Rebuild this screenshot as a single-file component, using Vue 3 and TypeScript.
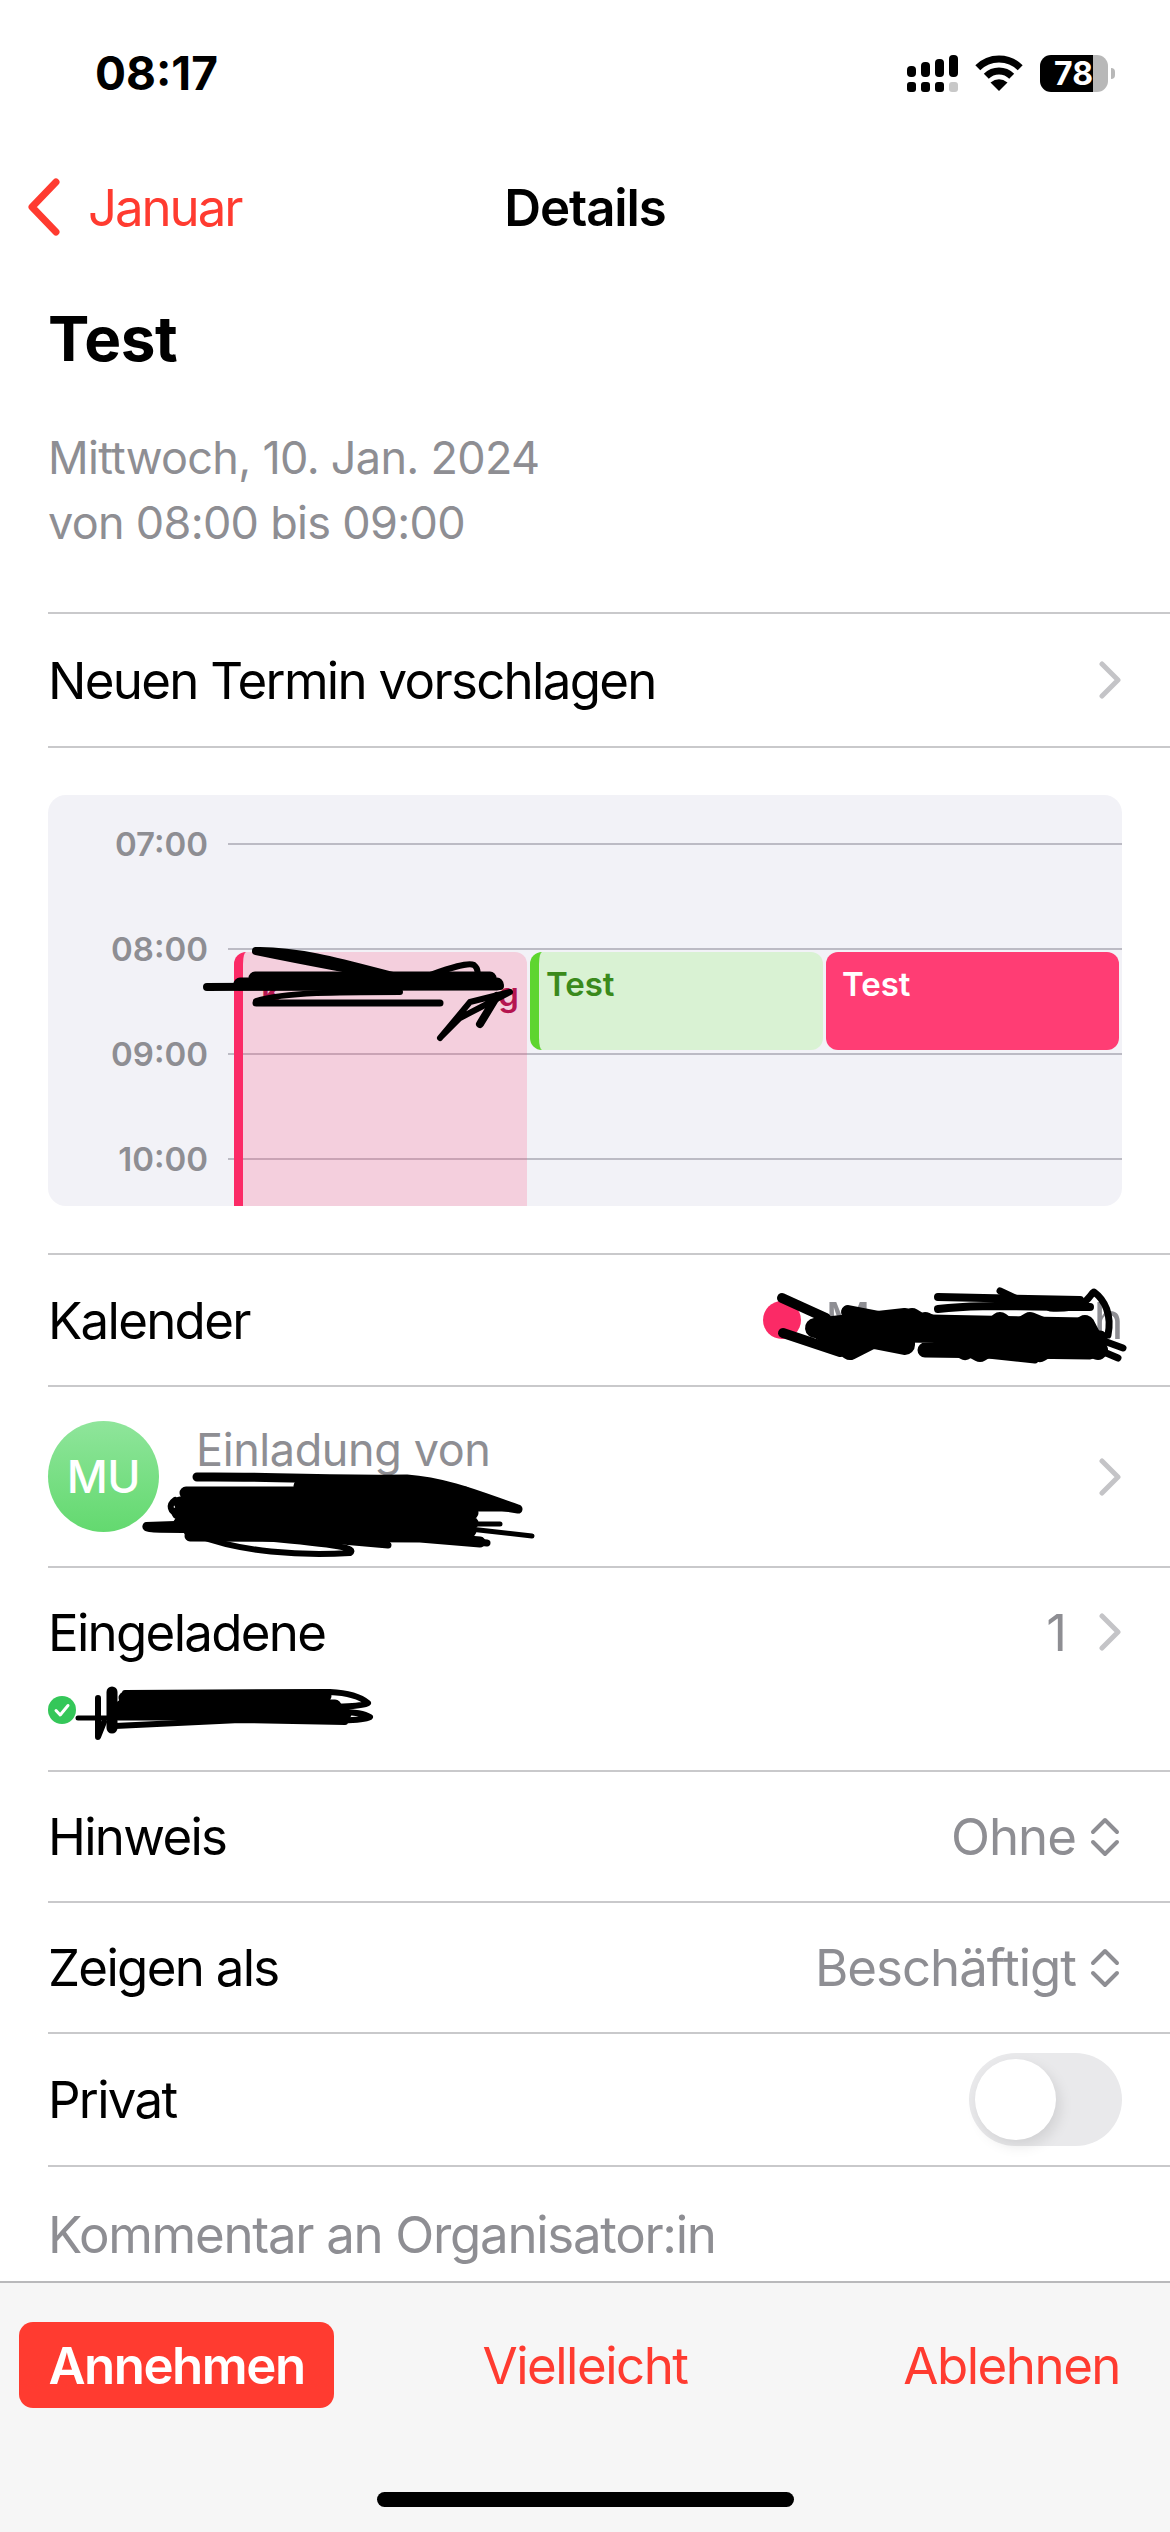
<script setup lang="ts">
const hours: string[] = ['07:00', '08:00', '09:00', '10:00']
const topSignal: number[] = [11, 15, 18, 22]
</script>

<template>
  <div class="phone">
    <header class="status">
      <span class="time">08:17</span>
      <div class="status-icons">
        <div class="signal">
          <div class="signal-col" v-for="(h, i) in topSignal" :key="i">
            <i class="bar" :style="{ height: h + 'px' }"></i>
            <i class="dot" :class="{ off: i === 3 }"></i>
          </div>
        </div>
        <svg class="wifi" width="48" height="36" viewBox="0 0 48 36">
          <path d="M2.8 12.8A30 30 0 0 1 45.2 12.8" fill="none" stroke="#000" stroke-width="7" />
          <path d="M11.3 21.3A18 18 0 0 1 36.7 21.3" fill="none" stroke="#000" stroke-width="7" />
          <path d="M24 36L15.5 27.5Q24 21 32.5 27.5Z" fill="#000" />
        </svg>
        <div class="battery">
          <div class="battery-body"><span>78</span></div>
          <i class="battery-nub"></i>
        </div>
      </div>
    </header>

    <nav class="nav">
      <div class="back">
        <svg width="38" height="60" viewBox="0 0 38 60">
          <path d="M31 5L7 30L31 55" fill="none" stroke="#ff3b30" stroke-width="7" stroke-linecap="round" stroke-linejoin="round" />
        </svg>
        <span>Januar</span>
      </div>
      <span class="nav-title">Details</span>
    </nav>

    <section class="intro">
      <h1>Test</h1>
      <p>Mittwoch, 10. Jan. 2024</p>
      <p>von 08:00 bis 09:00</p>
    </section>

    <div class="row row-propose">
      <span>Neuen Termin vorschlagen</span>
      <svg class="chev" width="24" height="38" viewBox="0 0 24 38">
        <path d="M4 3L20 19L4 35" fill="none" stroke="#c4c4c7" stroke-width="5" stroke-linecap="round" stroke-linejoin="round" />
      </svg>
    </div>

    <div class="timeline-wrap">
      <div class="timeline">
        <div class="hour" v-for="h in hours" :key="h">
          <span class="hour-label">{{ h }}</span>
          <i class="hour-line"></i>
        </div>
        <div class="event event-own"><span>K</span><span>g</span></div>
        <div class="event event-green"><span>Test</span></div>
        <div class="event event-pink"><span>Test</span></div>
      </div>
    </div>

    <div class="row row-calendar">
      <span>Kalender</span>
      <div class="calendar-value">
        <i class="calendar-dot"></i>
        <div class="calendar-name"><span>M</span><span>h</span></div>
      </div>
    </div>

    <div class="row row-invite">
      <div class="avatar">MU</div>
      <span class="invite-label">Einladung von</span>
      <svg class="chev" width="24" height="38" viewBox="0 0 24 38">
        <path d="M4 3L20 19L4 35" fill="none" stroke="#c4c4c7" stroke-width="5" stroke-linecap="round" stroke-linejoin="round" />
      </svg>
    </div>

    <div class="row row-attendees">
      <div class="attendee-head">
        <span>Eingeladene</span>
        <div class="value value-count">
          <span>1</span>
          <svg class="chev" width="24" height="38" viewBox="0 0 24 38">
            <path d="M4 3L20 19L4 35" fill="none" stroke="#c4c4c7" stroke-width="5" stroke-linecap="round" stroke-linejoin="round" />
          </svg>
        </div>
      </div>
      <svg class="accepted" width="28" height="28" viewBox="0 0 28 28">
        <circle cx="14" cy="14" r="14" fill="#34c759" />
        <path d="M8 14.5L12.2 19L20 9.5" fill="none" stroke="#fff" stroke-width="3" stroke-linecap="round" stroke-linejoin="round" />
      </svg>
    </div>

    <div class="row">
      <span>Hinweis</span>
      <div class="value">
        <span>Ohne</span>
        <svg class="updown" width="30" height="40" viewBox="0 0 30 40">
          <path d="M3 15L15 3L27 15M3 25L15 37L27 25" fill="none" stroke="#8e8e93" stroke-width="4" stroke-linecap="round" stroke-linejoin="round" />
        </svg>
      </div>
    </div>

    <div class="row">
      <span>Zeigen als</span>
      <div class="value">
        <span>Beschäftigt</span>
        <svg class="updown" width="30" height="40" viewBox="0 0 30 40">
          <path d="M3 15L15 3L27 15M3 25L15 37L27 25" fill="none" stroke="#8e8e93" stroke-width="4" stroke-linecap="round" stroke-linejoin="round" />
        </svg>
      </div>
    </div>

    <div class="row row-private">
      <span>Privat</span>
      <div class="toggle"><i class="knob"></i></div>
    </div>

    <div class="row row-comment">
      <span>Kommentar an Organisator:in</span>
    </div>

    <footer class="footer">
      <div class="actions">
        <button class="action accept">Annehmen</button>
        <button class="action maybe">Vielleicht</button>
        <button class="action decline">Ablehnen</button>
      </div>
      <i class="home"></i>
    </footer>

    <svg class="scribbles" width="1170" height="2532" viewBox="0 0 1170 2532" fill="none" stroke="#000" stroke-linecap="round" stroke-linejoin="round">
      <g>
        <path d="M256 951C300 950 350 965 400 978C340 968 300 960 256 951" stroke-width="8" />
        <path d="M207 987L500 986" stroke-width="8" />
        <path d="M255 978L490 978M240 984L497 984" stroke-width="13" />
        <path d="M256 1001C285 992 340 992 400 992" stroke-width="6" />
        <path d="M256 1003L440 1003" stroke-width="7" />
        <path d="M430 975C450 968 468 962 474 965C479 969 478 975 476 978" stroke-width="6" />
        <path d="M440 1038L470 1002L510 992L460 1018L440 1038" stroke-width="6" />
        <path d="M480 1024L497 996" stroke-width="8" />
      </g>

      <g>
        <path d="M782 1298L826 1318M783 1333L840 1352" stroke-width="10" />
        <path d="M815 1328L905 1318L905 1345L818 1328L850 1350L905 1322" stroke-width="20" />
        <path d="M848 1312L900 1322" stroke-width="14" />
        <path d="M912 1318L965 1350L1000 1322L1040 1352L1085 1325L1098 1350L1030 1322L980 1352L925 1322L970 1345L1060 1328L1090 1345" stroke-width="20" />
        <path d="M905 1335L1100 1338M925 1350L1090 1352M930 1322L1085 1325" stroke-width="15" />
        <path d="M938 1297L1080 1300M938 1309C980 1304 1020 1307 1090 1307" stroke-width="8" />
        <path d="M1000 1291L1030 1305" stroke-width="7" />
        <path d="M1050 1308C1090 1310 1088 1295 1094 1292C1105 1300 1112 1315 1108 1335" stroke-width="7" />
        <path d="M1060 1325L1123 1348M1040 1325L1118 1358M960 1352L1035 1360" stroke-width="7" />
      </g>

      <g>
        <path d="M197 1477C260 1476 300 1480 407 1479C450 1482 490 1500 518 1509L473 1502" stroke-width="9" />
        <path d="M186 1493L465 1493M180 1503L472 1503M178 1513L472 1513M180 1523L472 1523M190 1531L470 1531M300 1486L440 1490" stroke-width="13" />
        <path d="M175 1500C168 1505 170 1512 178 1514" stroke-width="6" />
        <path d="M190 1536L420 1537L480 1542" stroke-width="11" />
        <path d="M175 1524L146 1525C143 1530 150 1530 190 1530" stroke-width="6" />
        <path d="M197 1535C240 1552 300 1556 350 1553C357 1548 340 1545 263 1538" stroke-width="6" />
        <path d="M297 1537L388 1545C385 1540 360 1535 340 1533" stroke-width="7" />
        <path d="M470 1529L532 1536M470 1524L500 1524" stroke-width="5" />
        <path d="M440 1538L487 1543" stroke-width="7" />
        <path d="M470 1509L518 1509" stroke-width="5" />
      </g>

      <g>
        <path d="M78 1718L115 1718" stroke-width="5" />
        <path d="M98 1698L98 1725L98 1737L104 1722" stroke-width="6" />
        <path d="M112 1692L112 1728" stroke-width="11" />
        <path d="M125 1693L330 1692C350 1693 362 1698 368 1703C362 1707 340 1706 325 1708" stroke-width="6" />
        <path d="M125 1698L325 1696M122 1706L335 1706M118 1714L345 1714" stroke-width="13" />
        <path d="M340 1712C355 1712 365 1714 370 1717C362 1721 345 1720 330 1721" stroke-width="6" />
        <path d="M115 1726L240 1720L345 1722" stroke-width="6" />
      </g>
    </svg>
  </div>
</template>

<style scoped>
.phone {
  position: relative;
  width: 1170px;
  height: 2532px;
  display: flex;
  flex-direction: column;
  overflow: hidden;
  background: #fff;
  color: #000;
  font-family: Inter, "Liberation Sans", sans-serif;
  font-size: 51px;
  letter-spacing: -1.7px;
}
.status {
  height: 146px;
  display: flex;
  justify-content: space-between;
  align-items: center;
  padding: 0 55px 0 95px;
  box-sizing: border-box;
}
.time {
  font-size: 46px;
  font-weight: 700;
  letter-spacing: 0;
}
.status-icons {
  display: flex;
  align-items: center;
  gap: 17px;
}
.signal {
  display: flex;
  gap: 5px;
  align-items: flex-end;
}
.signal-col {
  display: flex;
  flex-direction: column;
  gap: 5px;
  width: 9px;
}
.bar {
  background: #000;
  border-radius: 4px;
}
.dot {
  height: 10px;
  background: #000;
  border-radius: 3px;
}
.dot.off {
  background: #c8c8c8;
}
.battery {
  display: flex;
  align-items: center;
  gap: 3px;
}
.battery-body {
  width: 68px;
  height: 37px;
  box-sizing: border-box;
  padding-right: 15px;
  border-radius: 11px;
  background: linear-gradient(90deg, #000 53px, #b8b8b8 53px);
  color: #fff;
  font-size: 32px;
  font-weight: 700;
  line-height: 37px;
  text-align: right;
  letter-spacing: 0;
}
.battery-nub {
  width: 4px;
  height: 11px;
  background: #b8b8b8;
  border-radius: 0 4px 4px 0;
}
.nav {
  height: 122px;
  position: relative;
  display: flex;
  align-items: center;
  justify-content: center;
}
.back {
  position: absolute;
  left: 25px;
  top: 30px;
  height: 62px;
  display: flex;
  align-items: center;
  gap: 25px;
  color: #ff3b30;
  letter-spacing: -2.1px;
}
.nav-title {
  font-weight: 600;
  letter-spacing: -1.1px;
}
.intro {
  padding: 35px 0 57px 48px;
}
.intro h1 {
  margin: 0 0 50px;
  font-size: 62px;
  line-height: 72px;
  font-weight: 700;
  letter-spacing: -0.4px;
}
.intro p {
  margin: 0;
  font-size: 45px;
  line-height: 65px;
  color: #8e8e93;
  letter-spacing: -0.7px;
}
.row {
  margin-left: 48px;
  padding-right: 48px;
  border-top: 2px solid #c9c9cb;
  box-sizing: border-box;
  display: flex;
  align-items: center;
  justify-content: space-between;
  height: 131px;
}
.row-propose {
  height: 134px;
}
.row-calendar {
  height: 132px;
}
.timeline-wrap {
  border-top: 2px solid #c9c9cb;
  margin-left: 48px;
  padding: 47px 48px 47px 0;
  height: 507px;
  box-sizing: border-box;
}
.timeline {
  position: relative;
  height: 411px;
  padding-top: 29px;
  box-sizing: border-box;
  background: #f2f2f7;
  border-radius: 18px;
  overflow: hidden;
}
.hour {
  height: 105px;
  display: flex;
  align-items: flex-start;
  gap: 20px;
}
.hour-label {
  width: 160px;
  text-align: right;
  font-size: 33px;
  line-height: 40px;
  font-weight: 600;
  color: #8e8e93;
  letter-spacing: 0;
}
.hour-line {
  flex: 1;
  height: 2px;
  margin-top: 19px;
  background: #bcbbc4;
}
.event {
  position: absolute;
  top: 157px;
  width: 293px;
  box-sizing: border-box;
  font-size: 33px;
  line-height: 40px;
  font-weight: 600;
  letter-spacing: 0;
}
.event-own {
  left: 186px;
  bottom: 0;
  padding: 22px 8px 0 18px;
  display: flex;
  justify-content: space-between;
  background: rgba(255, 70, 120, 0.2);
  border-left: 9px solid #fb2a66;
  border-radius: 12px 12px 0 0;
  color: #b5154f;
}
.event-green {
  left: 482px;
  height: 98px;
  padding: 12px 0 0 7px;
  background: #d9f2d3;
  border-left: 9px solid #5ed52f;
  border-radius: 12px;
  color: #3a8a1c;
}
.event-pink {
  left: 778px;
  height: 98px;
  padding: 12px 0 0 16px;
  background: #ff3d74;
  border-radius: 12px;
  color: #fff;
}
.calendar-value {
  display: flex;
  align-items: center;
}
.calendar-dot {
  width: 38px;
  height: 38px;
  border-radius: 50%;
  background: #fb2a66;
  margin-right: 24px;
}
.calendar-name {
  width: 297px;
  display: flex;
  justify-content: space-between;
  color: #8e8e93;
}
.row-invite {
  height: 181px;
  justify-content: flex-start;
  gap: 37px;
}
.avatar {
  width: 111px;
  height: 111px;
  border-radius: 50%;
  background: linear-gradient(#8fe59b, #63d96f);
  color: #fff;
  font-size: 45px;
  font-weight: 500;
  letter-spacing: -0.4px;
  display: flex;
  align-items: center;
  justify-content: center;
}
.invite-label {
  flex: 1;
  font-size: 45px;
  line-height: 56px;
  color: #8e8e93;
  align-self: flex-start;
  margin-top: 35px;
  letter-spacing: -0.4px;
}
.row-attendees {
  height: 204px;
  flex-direction: column;
  align-items: stretch;
  justify-content: flex-start;
}
.attendee-head {
  display: flex;
  justify-content: space-between;
  align-items: center;
  height: 62px;
  margin-top: 33px;
}
.accepted {
  display: block;
  margin-top: 33px;
}
.value {
  display: flex;
  align-items: center;
  gap: 14px;
  color: #8e8e93;
  letter-spacing: -1px;
}
.value-count {
  gap: 32px;
}
.chev {
  flex: none;
}
.updown {
  flex: none;
  margin-right: 2px;
}
.row-private {
  height: 133px;
}
.toggle {
  width: 153px;
  height: 93px;
  border-radius: 47px;
  background: #e9e9eb;
  padding: 6px;
  box-sizing: border-box;
}
.knob {
  display: block;
  width: 81px;
  height: 81px;
  border-radius: 50%;
  background: #fff;
  box-shadow: 4px 6px 14px rgba(0, 0, 0, 0.1);
}
.row-comment {
  height: 116px;
  color: #8e8e93;
  align-items: flex-start;
  padding-top: 37px;
  letter-spacing: -1.3px;
}
.footer {
  flex: 1;
  border-top: 2px solid #b9b9bb;
  background: #f6f6f6;
  padding-top: 39px;
  display: flex;
  flex-direction: column;
  align-items: center;
}
.actions {
  align-self: stretch;
  height: 86px;
  padding: 0 50px;
  display: grid;
  grid-template-columns: 1fr auto 1fr;
  align-items: center;
}
.action {
  border: 0;
  padding: 0;
  background: none;
  font: inherit;
  letter-spacing: -1.5px;
  color: #ff3b30;
}
.accept {
  justify-self: start;
  width: 315px;
  height: 86px;
  margin-left: -31px;
  background: #ff3b30;
  color: #fff;
  border-radius: 14px;
  font-weight: 600;
}
.decline {
  justify-self: end;
}
.home {
  display: block;
  width: 417px;
  height: 15px;
  border-radius: 8px;
  background: #000;
  margin-top: 84px;
}
.scribbles {
  position: absolute;
  left: 0;
  top: 0;
  pointer-events: none;
}
</style>
